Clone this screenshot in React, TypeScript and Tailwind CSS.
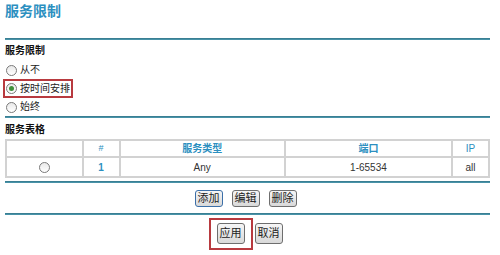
import React from 'react';

const FONT = "font-['Liberation_Sans','Noto_Sans_CJK_SC',sans-serif]";

function Radio({ checked = false }: { checked?: boolean }) {
  return (
    <span className="w-[11px] h-[11px] rounded-full border border-[#7a7a7a] bg-gradient-to-b from-[#e9e9e9] to-white flex items-center justify-center shrink-0">
      {checked && <span className="w-[5px] h-[5px] rounded-full bg-[#3f8f3a]" />}
    </span>
  );
}

function Rule() {
  return <div className="h-[2px] bg-[#4893a8] border-t border-[#3a7f93]" />;
}

function Btn({ label, tall = false, focus = false }: { label: string; tall?: boolean; focus?: boolean }) {
  return (
    <button
      className={`${tall ? 'h-[21px]' : 'h-[17px]'} w-[28px] text-[11px] leading-none text-[#222] rounded-[3px] border ${
        focus ? 'border-[#3c6fa8]' : 'border-[#6e6e6e]'
      } bg-gradient-to-b from-[#f6f6f6] to-[#d9d9d9] flex items-center justify-center`}
    >
      {label}
    </button>
  );
}

export default function App() {
  return (
    <div className={`w-[500px] h-[255px] bg-white pl-[5px] pr-[10px] ${FONT}`}>
      {/* Page title */}
      <h1 className="pt-[3px] h-[38px] text-[14px] font-bold text-[#2c8fc0] leading-[16px]">服务限制</h1>
      <Rule />

      {/* Service restriction options */}
      <div className="pt-[5px] h-[76px]">
        <div className="text-[10px] font-bold text-[#111] leading-[12px]">服务限制</div>
        <div className="mt-[4px] flex flex-col text-[10px] leading-none text-[#222] whitespace-nowrap">
          <label className="h-[18px] flex items-center gap-[3px] pl-[1px]">
            <Radio />
            从不
          </label>
          <label className="h-[19px] w-[70px] -ml-[2px] pl-[1px] flex items-center gap-[3px] border-2 border-[#b83a3f]">
            <Radio checked />
            按时间安排
          </label>
          <label className="h-[18px] flex items-center gap-[3px] pl-[1px]">
            <Radio />
            始终
          </label>
        </div>
      </div>
      <Rule />

      {/* Service table */}
      <div className="pt-[6px] h-[63px]">
        <div className="text-[10px] font-bold text-[#111] leading-[12px]">服务表格</div>
        <table className="mt-[3px] w-[485px] border-collapse border-2 border-[#d2d2d2] text-[10px]">
          <thead>
            <tr className="h-[17px] text-[#2c8fc0] font-bold">
              <th className="w-[77px] border-2 border-[#d2d2d2]"></th>
              <th className="w-[37px] border-2 border-[#d2d2d2] font-normal text-[9px]">#</th>
              <th className="w-[166px] border-2 border-[#d2d2d2]">服务类型</th>
              <th className="w-[168px] border-2 border-[#d2d2d2]">端口</th>
              <th className="w-[37px] border-2 border-[#d2d2d2] font-normal">IP</th>
            </tr>
          </thead>
          <tbody>
            <tr className="h-[20px] text-[#333]">
              <td className="border-2 border-[#d2d2d2]">
                <div className="flex justify-center">
                  <Radio />
                </div>
              </td>
              <td className="border-2 border-[#d2d2d2] text-center font-bold text-[#2c8fc0]">1</td>
              <td className="border-2 border-[#d2d2d2] text-center">Any</td>
              <td className="border-2 border-[#d2d2d2] text-center">1-65534</td>
              <td className="border-2 border-[#d2d2d2] text-center">all</td>
            </tr>
          </tbody>
        </table>
      </div>
      <Rule />

      {/* Table actions */}
      <div className="h-[30px] flex items-center justify-center gap-[9px] pr-[4px]">
        <Btn label="添加" focus />
        <Btn label="编辑" />
        <Btn label="删除" />
      </div>
      <Rule />

      {/* Apply / cancel */}
      <div className="pt-[3px] flex justify-center items-start gap-[2px] pr-[4px]">
        <div className="border-2 border-[#b83a3f] px-[6px] pt-[3px] pb-[4px]">
          <Btn label="应用" tall />
        </div>
        <div className="pt-[5px]">
          <Btn label="取消" tall />
        </div>
      </div>
    </div>
  );
}
